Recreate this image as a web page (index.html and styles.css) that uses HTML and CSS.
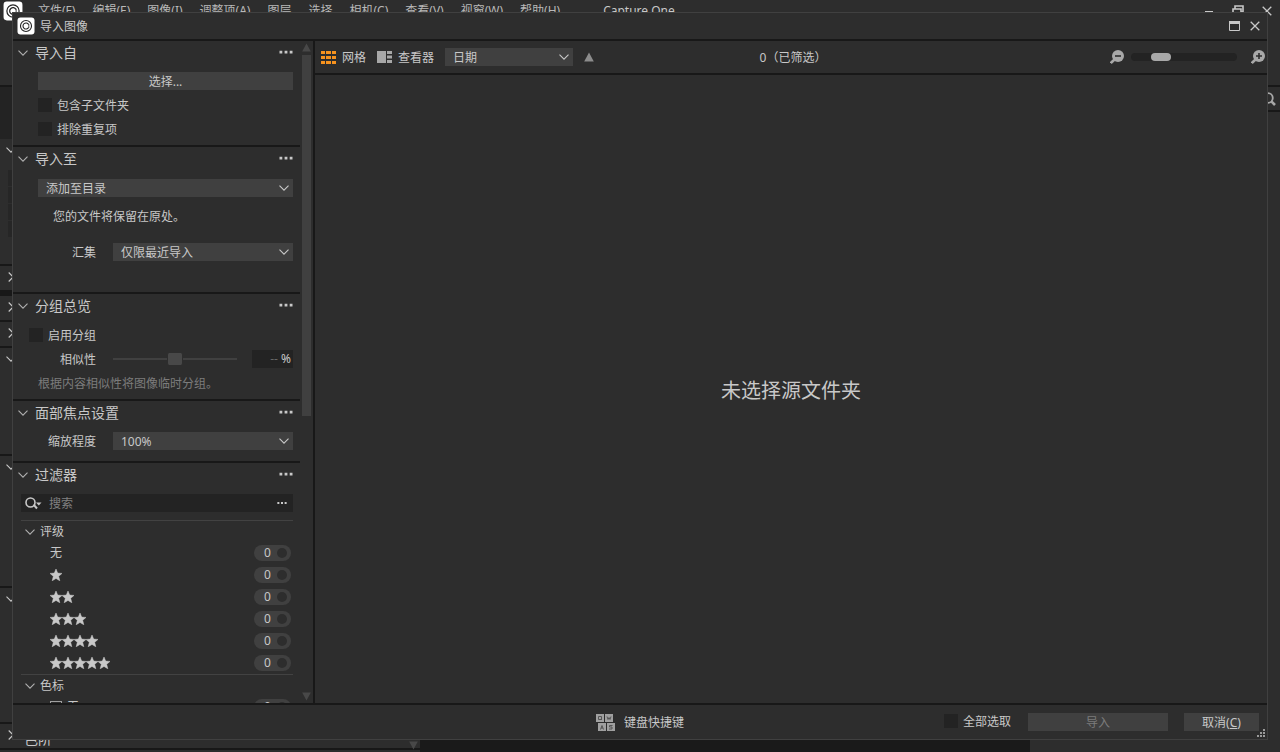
FILE: index.html
```html
<!DOCTYPE html>
<html lang="zh-CN">

<head>
    <meta charset="UTF-8">
    <title>Capture One</title>
    <link rel="stylesheet" href="styles.css">
</head>

<body>

    <!-- shared icons -->
    <svg class="sprite" width="0" height="0">
        <symbol id="down" viewBox="0 0 10 6"><path d="M.5 .7 5 5.2 9.5 .7" fill="none" stroke="currentColor" stroke-width="1.1" /></symbol>
        <symbol id="right" viewBox="0 0 6 10"><path d="M.7 .5 5.2 5 .7 9.5" fill="none" stroke="currentColor" stroke-width="1.1" /></symbol>
        <symbol id="dots" viewBox="0 0 14 4"><path d="M.5 .7h2.8v2.8H.5zM5.6 .7h2.8v2.8H5.6zM10.7 .7h2.8v2.8h-2.8z" fill="currentColor" /></symbol>
        <symbol id="up-tri" viewBox="0 0 10 10"><path d="M5 .5 9.8 9.5H.2z" fill="currentColor" /></symbol>
        <symbol id="down-tri" viewBox="0 0 10 10"><path d="M5 9.5 9.8 .5H.2z" fill="currentColor" /></symbol>
        <symbol id="close" viewBox="0 0 10 10"><path d="M.7 .7 9.3 9.3M9.3 .7 .7 9.3" fill="none" stroke="currentColor" stroke-width="1.3" /></symbol>
        <symbol id="star" viewBox="0 0 12 12"><path d="M6 0l1.7 4.1 4.3.3-3.3 2.9 1.1 4.5L6 9.4l-3.800 2.400 1.100-4.500L0 4.400l4.300-.3z" fill="currentColor" stroke="currentColor" stroke-width=".5" /></symbol>
        <symbol id="search" viewBox="0 0 14 14"><path d="M9.6 9.6 13 13" stroke="currentColor" stroke-width="2.6" /><circle cx="6" cy="6" r="4.8" fill="none" stroke="currentColor" stroke-width="1.8" /></symbol>
        <symbol id="logo" viewBox="0 0 18 18">
            <rect x=".5" y=".5" width="17" height="17" rx="3" fill="#fff" />
            <circle cx="9" cy="9" r="5.5" fill="none" stroke="#222" stroke-width="1.1" />
            <path d="M11.6 7.5A3 3 0 1 0 11.6 10.5" fill="none" stroke="#222" stroke-width="1.1" />
            <path d="M11.8 7v4" stroke="#222" stroke-width=".8" />
        </symbol>
    </svg>

    <!-- main window -->
    <div class="app">
        <header class="menubar">
            <svg class="app_logo"><use href="#logo" /></svg>
            <nav>
                <a href="#">文件(F)</a>
                <a href="#">编辑(E)</a>
                <a href="#">图像(I)</a>
                <a href="#">调整项(A)</a>
                <a href="#">图层</a>
                <a href="#">选择</a>
                <a href="#">相机(C)</a>
                <a href="#">查看(V)</a>
                <a href="#">视窗(W)</a>
                <a href="#">帮助(H)</a>
            </nav>
            <span class="app_name">Capture One</span>
            <div class="app_controls">
                <svg width="10" height="12"><path d="M1 6.5h8" stroke="currentColor" /></svg>
                <svg width="12" height="12"><path d="M3 4V1h8v6H9M1 11V4h8v7z" fill="none" stroke="currentColor" stroke-width="1.6" /></svg>
                <svg width="10" height="10"><use href="#close" /></svg>
            </div>
        </header>
        <div class="app_body">
            <aside class="tools">
                <div class="tool_tabs"></div>
                <div class="histogram"></div>
                <section class="tool open basic"><svg><use href="#down" /></svg><div class="levels"><i></i><i></i><i></i><i></i></div></section>
                <section class="tool last"><svg><use href="#right" /></svg></section>
                <section class="tool"><svg><use href="#right" /></svg></section>
                <section class="tool"><svg><use href="#right" /></svg></section>
                <section class="tool open exposure"><svg><use href="#down" /></svg></section>
                <section class="tool open hdr"><svg><use href="#down" /></svg></section>
                <section class="tool open curve"><svg><use href="#down" /></svg></section>
                <section class="tool"><svg><use href="#right" /></svg><h2>色阶</h2></section>
                <svg class="tools_more"><use href="#down-tri" /></svg>
            </aside>
            <div class="viewer"></div>
            <aside class="browser">
                <div class="browser_search"><svg width="14" height="14"><use href="#search" /></svg></div>
            </aside>
        </div>
    </div>

    <!-- import dialog -->
    <div class="dialog" role="dialog" aria-labelledby="dialog_title">
        <header class="titlebar">
            <svg class="logo"><use href="#logo" /></svg>
            <h1 id="dialog_title">导入图像</h1>
            <button class="icon_button" aria-label="最大化"><svg width="11" height="10"><path d="M.5 .5h10v9H.5z" fill="none" stroke="currentColor" /><path d="M0 0h11v3H0z" fill="currentColor" /></svg></button>
            <button class="icon_button" aria-label="关闭"><svg width="10" height="10"><use href="#close" /></svg></button>
        </header>

        <div class="content">
            <aside class="sidebar">
                <div class="panels">
                    <section class="panel from">
                        <h2><svg class="chevron"><use href="#down" /></svg>导入自<button class="more" aria-label="更多"><svg><use href="#dots" /></svg></button></h2>
                        <button class="button choose">选择...</button>
                        <label class="check"><input type="checkbox">包含子文件夹</label>
                        <label class="check"><input type="checkbox">排除重复项</label>
                    </section>

                    <section class="panel to">
                        <h2><svg class="chevron"><use href="#down" /></svg>导入至<button class="more" aria-label="更多"><svg><use href="#dots" /></svg></button></h2>
                        <div class="select">
                            <select aria-label="导入至">
                                <option>添加至目录</option>
                            </select>
                            <svg><use href="#down" /></svg>
                        </div>
                        <p class="kept">您的文件将保留在原处。</p>
                        <div class="row">
                            <label for="collection">汇集</label>
                            <div class="select">
                                <select id="collection">
                                    <option>仅限最近导入</option>
                                </select>
                                <svg><use href="#down" /></svg>
                            </div>
                        </div>
                    </section>

                    <section class="panel group">
                        <h2><svg class="chevron"><use href="#down" /></svg>分组总览<button class="more" aria-label="更多"><svg><use href="#dots" /></svg></button></h2>
                        <label class="check"><input type="checkbox">启用分组</label>
                        <div class="row">
                            <label for="similarity">相似性</label>
                            <input type="range" id="similarity" class="similarity">
                            <output for="similarity"><span>--</span> %</output>
                        </div>
                        <p class="hint">根据内容相似性将图像临时分组。</p>
                    </section>

                    <section class="panel face">
                        <h2><svg class="chevron"><use href="#down" /></svg>面部焦点设置<button class="more" aria-label="更多"><svg><use href="#dots" /></svg></button></h2>
                        <div class="row">
                            <label for="zoom_level">缩放程度</label>
                            <div class="select">
                                <select id="zoom_level">
                                    <option>100%</option>
                                </select>
                                <svg><use href="#down" /></svg>
                            </div>
                        </div>
                    </section>

                    <section class="panel filter">
                        <h2><svg class="chevron"><use href="#down" /></svg>过滤器<button class="more" aria-label="更多"><svg><use href="#dots" /></svg></button></h2>
                        <div class="search">
                            <svg width="18" height="14"><path d="M8.6 8.6 12 12.5" stroke="currentColor" stroke-width="2" /><circle cx="5.5" cy="6.5" r="4.5" fill="none" stroke="currentColor" stroke-width="1.6" /><path d="M11 6.5h5.5l-2.7 3z" fill="currentColor" /></svg>
                            <input type="text" placeholder="搜索" aria-label="搜索">
                            <svg width="10" height="4"><use href="#dots" /></svg>
                        </div>
                        <h3><svg class="chevron"><use href="#down" /></svg>评级</h3>
                        <ul>
                            <li>无<button class="count">0</button></li>
                            <li><svg><use href="#star" /></svg><button class="count">0</button></li>
                            <li><svg><use href="#star" /></svg><svg><use href="#star" /></svg><button class="count">0</button></li>
                            <li><svg><use href="#star" /></svg><svg><use href="#star" /></svg><svg><use href="#star" /></svg><button class="count">0</button></li>
                            <li><svg><use href="#star" /></svg><svg><use href="#star" /></svg><svg><use href="#star" /></svg><svg><use href="#star" /></svg><button class="count">0</button></li>
                            <li><svg><use href="#star" /></svg><svg><use href="#star" /></svg><svg><use href="#star" /></svg><svg><use href="#star" /></svg><svg><use href="#star" /></svg><button class="count">0</button></li>
                        </ul>
                        <h3><svg class="chevron"><use href="#down" /></svg>色标</h3>
                        <ul>
                            <li><span class="swatch"></span>无<button class="count">0</button></li>
                        </ul>
                    </section>
                </div>
                <div class="scrollbar">
                    <svg><use href="#up-tri" /></svg>
                    <div class="track"><div class="thumb"></div></div>
                    <svg><use href="#down-tri" /></svg>
                </div>
            </aside>

            <main>
                <div class="toolbar">
                    <div class="views">
                        <button class="view"><svg class="grid_icon" width="15" height="14"><path d="M0 1h4v3H0zM5 1h5v3H5zM11 1h4v3h-4zM0 6h4v3H0zM5 6h5v3H5zM11 6h4v3h-4zM0 11h4v3H0zM5 11h5v3H5zM11 11h4v3h-4z" fill="currentColor" /></svg><span>网格</span></button>
                        <button class="view"><svg width="15" height="14"><path d="M0 1h9v12H0zM10 1h5v3h-5zM10 5.5h5v3h-5zM10 10h5v3h-5z" fill="#a8a8a8" /></svg><span>查看器</span></button>
                        <div class="select sort">
                            <select aria-label="排序">
                                <option>日期</option>
                            </select>
                            <svg><use href="#down" /></svg>
                        </div>
                        <button class="icon_button order" aria-label="升序"><svg width="10" height="10"><use href="#up-tri" /></svg></button>
                    </div>
                    <span class="selected">0（已筛选）</span>
                    <div class="zoom">
                        <svg width="14" height="14"><path d="M.8 13 5 9" stroke="currentColor" stroke-width="2.6" /><circle cx="8" cy="6" r="6" fill="currentColor" /><path d="M5 6h6" stroke="#2d2d2d" stroke-width="1.6" /></svg>
                        <input type="range" value="23" aria-label="缩略图大小">
                        <svg width="14" height="14"><path d="M.8 13 5 9" stroke="currentColor" stroke-width="2.6" /><circle cx="8" cy="6" r="6" fill="currentColor" /><path d="M5 6h6M8 3v6" stroke="#2d2d2d" stroke-width="1.6" /></svg>
                    </div>
                </div>
                <div class="empty">未选择源文件夹</div>
            </main>
        </div>

        <footer>
            <button class="shortcuts">
                <svg width="19" height="18">
                    <path d="M0 0h8v8H0zM9 0h8v8H9zM2 9h8v8H2zM11 9h8v8h-8z" fill="#a0a0a0" />
                    <path d="M2.5 2.5h3v3h-3zM5 5l1 1M11 2.5l1 3 1-2 1 2 1-3M4.5 15.5 6 11.5l1.5 4M5 14h2M16.5 11.5h-3V13h2.5v2h-3" fill="none" stroke="#555" />
                </svg>
                键盘快捷键
            </button>
            <div class="actions">
                <label class="check"><input type="checkbox">全部选取</label>
                <button class="button import" disabled>导入</button>
                <button class="button cancel">取消(<u>C</u>)</button>
            </div>
            <svg class="grip" width="9" height="9"><path d="M6 0h2v2H6zM3 3h2v2H3zM6 3h2v2H6zM0 6h2v2H0zM3 6h2v2H3zM6 6h2v2H6z" fill="#9a9a9a" /></svg>
        </footer>
    </div>

</body>

</html>
```

FILE: styles.css
```css
* {
    box-sizing: border-box;
}

body {
    margin: 0;
    height: 100vh;
    overflow: hidden;
    background-color: #2d2d2d;
    color: #c8c8c8;
    font-family: "Noto Sans", "Noto Sans CJK SC", sans-serif;
    font-size: 12px;
    line-height: 18px;
}

h1, h2, h3, p, ul {
    margin: 0;
    padding: 0;
    font-weight: normal;
    font-size: 12px;
}

svg {
    display: block;
    flex: none;
}

button, select, input {
    font: inherit;
    color: inherit;
    border: 0;
    border-radius: 0;
    margin: 0;
    padding: 0;
    background: none;
}

.sprite {
    position: absolute;
}

/* main window */

.app {
    display: flex;
    flex-direction: column;
    height: 100%;
}

.menubar {
    display: flex;
    align-items: center;
    height: 22px;
    padding: 0 8px 0 3px;
}

.app_logo {
    width: 20px;
    height: 20px;
}

.menubar nav {
    display: flex;
    gap: 17px;
    margin-left: 15px;
}

.menubar a {
    color: #b8b8b8;
    text-decoration: none;
}

.app_name {
    margin-left: 43px;
}

.app_controls {
    display: flex;
    align-items: center;
    gap: 18px;
    margin-left: auto;
}

.app_body {
    display: flex;
    flex: 1;
    min-height: 0;
}

.tools {
    position: relative;
    width: 420px;
    overflow: hidden;
}

.tool_tabs {
    height: 63px;
}

.histogram {
    height: 54px;
    border-top: 2px solid #181818;
    background-color: #232323;
}

.tool {
    display: flex;
    gap: 10px;
    height: 26px;
    padding: 6px 0 0 8px;
    border-bottom: 2px solid #181818;
}

.tool h2 {
    font-size: 14px;
}

.tool svg {
    width: 6px;
    height: 10px;
}

.tool.open {
    padding: 8px 0 0 6px;
    gap: 0;
}

.tool.open svg {
    width: 10px;
    height: 6px;
}

.tool.basic {
    height: 127px;
}

.tool.last {
    height: 30px;
    border-bottom-width: 6px;
}

.tool.exposure {
    height: 108px;
}

.tool.hdr {
    height: 132px;
}

.tool.curve {
    height: 136px;
}

.levels {
    display: grid;
    gap: 1px;
    align-content: start;
    margin: 23px 0 0 -8px;
    width: 60px;
}

.levels i {
    height: 16px;
    background-color: #262626;
}

.tools_more {
    position: absolute;
    right: 2px;
    bottom: 2px;
    width: 9px;
    height: 9px;
    color: #484848;
}

.viewer {
    flex: 1;
    background-color: #1a1a1a;
}

.browser {
    width: 250px;
    padding-top: 63px;
}

.browser_search {
    display: flex;
    justify-content: flex-end;
    align-items: center;
    height: 27px;
    padding-right: 4px;
    border-top: 2px solid #181818;
    border-bottom: 2px solid #181818;
    color: #a8a8a8;
}

/* import dialog */

.dialog {
    position: absolute;
    inset: 12px;
    display: flex;
    flex-direction: column;
    border: 1px solid #404040;
    background-color: #2d2d2d;
}

.titlebar {
    display: flex;
    align-items: center;
    gap: 10px;
    height: 28px;
    padding: 0 7px 0 4px;
    border-bottom: 2px solid #181818;
}

.logo {
    width: 18px;
    height: 18px;
}

.titlebar h1 {
    flex: 1;
    margin-left: -5px;
    padding-top: 2px;
}

.content {
    display: flex;
    flex: 1;
    min-height: 0;
}

.sidebar {
    display: flex;
    width: 302px;
    border-right: 2px solid #181818;
}

.panels {
    flex: 1;
    overflow: hidden;
}

.panel {
    padding: 0 7px 0 25px;
    border-bottom: 2px solid #181818;
}

.panel h2 {
    display: flex;
    align-items: center;
    height: 24px;
    margin-left: -20px;
    font-size: 14px;
}

.chevron {
    width: 10px;
    height: 6px;
    margin-right: 7px;
    color: #b0b0b0;
}

.more {
    margin-left: auto;
}

.more svg {
    width: 14px;
    height: 4px;
    margin-bottom: 2px;
}

.from {
    height: 106px;
}

.to {
    height: 147px;
}

.group {
    height: 107px;
}

.face {
    height: 62px;
}

.button {
    height: 18px;
    padding-top: 2px;
    background-color: #404040;
    line-height: 16px;
}

.choose {
    display: block;
    width: 100%;
    margin: 7px 0 4px;
}

.check {
    display: flex;
    align-items: center;
    gap: 5px;
    height: 24px;
}

.check input {
    appearance: none;
    width: 14px;
    height: 14px;
    margin-bottom: 2px;
    background-color: #232323;
}

.select {
    display: flex;
    align-items: center;
    flex: 1;
    height: 18px;
    padding-right: 4px;
    background-color: #404040;
}

.select select {
    appearance: none;
    flex: 1;
    padding: 2px 0 0 8px;
    line-height: 16px;
}

.select svg {
    width: 10px;
    height: 6px;
}

.to > .select {
    margin-top: 8px;
}

.kept {
    margin: 11px 0 16px 15px;
}

.row {
    display: flex;
    align-items: center;
}

.row label {
    width: 58px;
    margin-right: 17px;
    padding-top: 2px;
    text-align: right;
}

.group .check {
    margin: 6px 0 0 -9px;
}

.group .row {
    height: 22px;
}

.similarity {
    appearance: none;
    flex: 1;
    min-width: 0;
    height: 12px;
    margin-right: 15px;
}

.similarity::-webkit-slider-runnable-track {
    height: 2px;
    background-color: #404040;
}

.similarity::-webkit-slider-thumb {
    appearance: none;
    width: 16px;
    height: 12px;
    margin-top: -5px;
    border: solid #2d2d2d;
    border-width: 0 1px;
    border-radius: 2px;
    background-color: #484848;
}

output {
    width: 41px;
    padding-right: 2px;
    background-color: #232323;
    text-align: right;
}

output span {
    color: #666;
}

.hint {
    margin-top: 5px;
    color: #7c7c7c;
}

.face .row {
    margin-top: 6px;
}

.filter {
    padding-left: 8px;
    border-bottom: 0;
}

.filter h2 {
    margin-left: -3px;
}

.search {
    display: flex;
    align-items: center;
    gap: 6px;
    height: 18px;
    margin: 7px 0 8px;
    padding: 0 6px 0 4px;
    background-color: #232323;
}

.search input {
    flex: 1;
    min-width: 0;
    padding-top: 2px;
}

.search input::placeholder {
    color: #808080;
}

.filter h3 {
    display: flex;
    align-items: center;
    height: 22px;
    padding-left: 4px;
    border-top: 1px solid #424242;
}

.filter h3 .chevron {
    margin-right: 5px;
}

.filter ul {
    list-style: none;
    padding: 0 2px 0 29px;
}

.filter li {
    display: flex;
    align-items: center;
    height: 22px;
}

.filter li svg {
    width: 12px;
    height: 12px;
}

.count {
    display: flex;
    align-items: center;
    justify-content: space-between;
    width: 37px;
    height: 16px;
    margin-left: auto;
    padding: 0 4px 0 10px;
    border-radius: 8px;
    background-color: #404040;
}

.count::after {
    content: "";
    width: 10px;
    height: 10px;
    border-radius: 50%;
    background-color: #2d2d2d;
}

.swatch {
    width: 12px;
    height: 12px;
    margin-right: 5px;
    border: 1px solid #a0a0a0;
}

.scrollbar {
    display: flex;
    flex-direction: column;
    align-items: center;
    width: 13px;
    padding: 2px 1px;
}

.scrollbar svg {
    width: 9px;
    height: 9px;
    color: #484848;
}

.track {
    flex: 1;
    width: 9px;
    padding: 3px 0;
}

.thumb {
    height: 57%;
    background-color: #404040;
}

main {
    display: flex;
    flex-direction: column;
    flex: 1;
}

.toolbar {
    display: grid;
    grid-template-columns: 1fr auto 1fr;
    align-items: center;
    height: 34px;
    padding: 0 2px 0 6px;
    border-bottom: 2px solid #181818;
}

.views {
    display: flex;
    align-items: center;
}

.view {
    display: flex;
    align-items: center;
    gap: 6px;
    margin-right: 11px;
}

.view span,
.selected {
    padding-top: 2px;
}

.grid_icon {
    color: #f7931e;
}

.sort {
    flex: none;
    width: 128px;
}

.order {
    margin-left: 11px;
    color: #8c8c8c;
}

.zoom {
    display: flex;
    align-items: center;
    justify-content: flex-end;
    color: #a8a8a8;
}

.zoom input {
    appearance: none;
    width: 106px;
    height: 8px;
    margin: 0 14px 0 7px;
    border-radius: 4px;
    background-color: #232323;
}

.zoom input::-webkit-slider-thumb {
    appearance: none;
    width: 20px;
    height: 8px;
    border-radius: 4px;
    background-color: #a8a8a8;
}

.empty {
    display: flex;
    align-items: center;
    justify-content: center;
    flex: 1;
    padding-top: 3px;
    font-size: 20px;
}

footer {
    position: relative;
    display: grid;
    grid-template-columns: 1fr auto 1fr;
    align-items: center;
    height: 36px;
    padding: 0 8px;
    border-top: 2px solid #181818;
}

.shortcuts {
    display: flex;
    align-items: center;
    gap: 9px;
    grid-column: 2;
    padding-top: 1px;
}

.actions {
    display: flex;
    align-items: center;
    justify-content: flex-end;
}

.import {
    width: 140px;
    margin: 0 16px 0 17px;
    color: #7c7c7c;
}

.cancel {
    width: 75px;
}

.grip {
    position: absolute;
    right: 1px;
    bottom: 1px;
}
```
